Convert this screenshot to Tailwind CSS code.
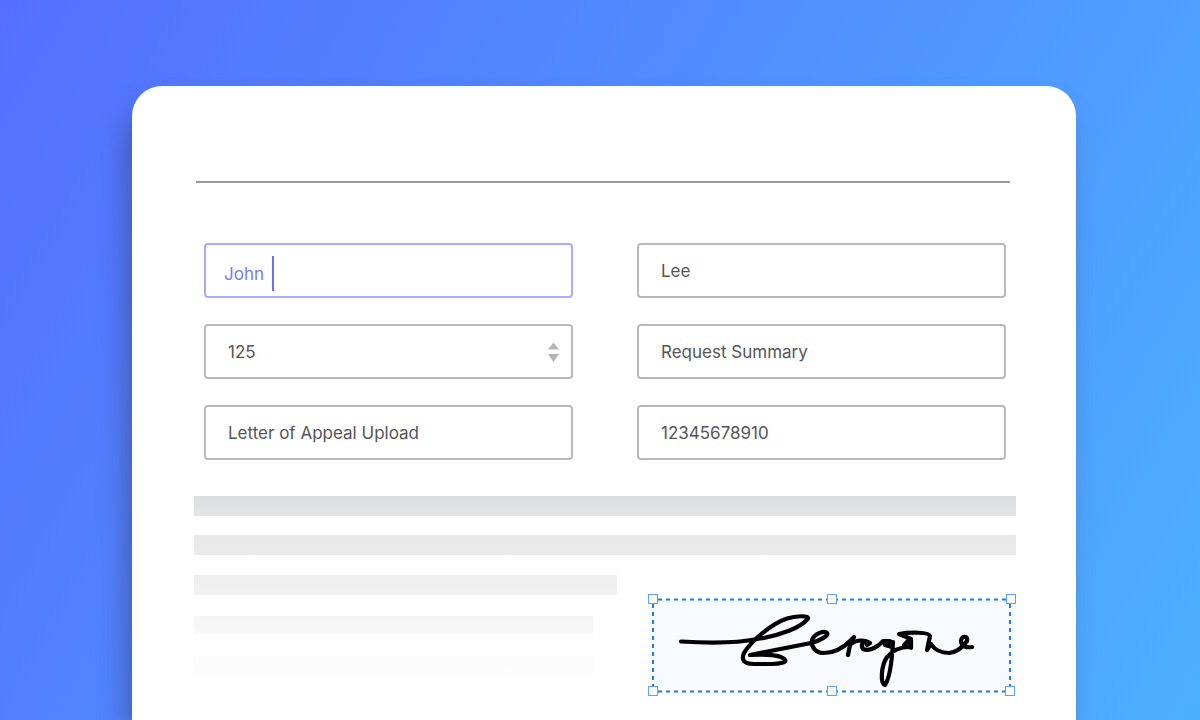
<!DOCTYPE html>
<html lang="en">
  <head>
    <meta charset="UTF-8" />
    <meta name="viewport" content="width=device-width, initial-scale=1.0" />
    <title>Appeal form</title>
    <script src="https://cdn.jsdelivr.net/npm/@tailwindcss/browser@4"></script>
  </head>
  <body class="font-['Inter',sans-serif]">
    <div
      class="h-screen overflow-hidden pt-[86px] pl-[132px] pr-[124px] bg-linear-[120deg,#546fff,#4db0ff]"
    >
      <main
        class="h-full rounded-t-[30px] bg-white pt-[95px] shadow-[-8px_20px_28px_-4px_rgba(50,50,80,0.5)]"
      >
        <hr class="ml-16 mr-[66px] border-t-2 border-[#999]" />

        <form class="mt-[60px] ml-[72px] mr-[70px] grid grid-cols-2 gap-x-16 gap-y-[26px] text-[17px] text-[#555]">
          <div class="relative">
            <input
              type="text"
              aria-label="First name"
              value="John"
              class="block w-full h-[55px] rounded-sm border-2 border-[#a9abff] pt-1.5 px-[18px] text-[#7579ff] outline-none"
            />
            <!-- text caret -->
            <span class="absolute left-[68px] top-[13px] h-[35px] w-[2px] bg-[#6b70ff]"></span>
          </div>
          <input
            type="text"
            aria-label="Last name"
            value="Lee"
            class="block w-full h-[55px] rounded-sm border-2 border-[#b9b9b9] px-[22px] outline-none"
          />
          <div class="relative">
            <input
              type="text"
              inputmode="numeric"
              aria-label="Case number"
              value="125"
              class="block w-full h-[55px] rounded-sm border-2 border-[#b9b9b9] px-[22px] outline-none"
            />
            <svg
              class="absolute right-[14px] top-[18px] w-3 h-5"
              viewBox="0 0 12 20"
              fill="#b5b5b5"
            >
              <path d="M6.5 0.5L12 7.5H1Z M1 12H12L6.5 20Z"></path>
            </svg>
          </div>
          <input
            type="text"
            aria-label="Request summary"
            value="Request Summary"
            class="block w-full h-[55px] rounded-sm border-2 border-[#b9b9b9] px-[22px] outline-none"
          />
          <input
            type="text"
            aria-label="Letter of appeal"
            value="Letter of Appeal Upload"
            class="block w-full h-[55px] rounded-sm border-2 border-[#b9b9b9] px-[22px] outline-none"
          />
          <input
            type="text"
            aria-label="Phone number"
            value="12345678910"
            class="block w-full h-[55px] rounded-sm border-2 border-[#b9b9b9] px-[22px] outline-none"
          />
        </form>

        <div class="mt-9 ml-[62px] mr-[60px]">
          <div class="h-5 bg-linear-to-b from-[#dddee0] to-[#e3e4e5]"></div>
          <div class="mt-[19px] h-5 bg-linear-to-b from-[#e6e7e8] to-[#ebebec]"></div>

          <div class="mt-5 flex justify-between">
            <div class="w-[423px]">
              <div class="h-5 bg-linear-to-b from-[#eeeeee] to-[#f2f2f2]"></div>
              <div class="mt-[21px] mr-6 h-[18px] bg-linear-to-b from-[#f5f5f5] to-[#f8f8f8]"></div>
              <div class="mt-[22px] mr-6 h-[18px] bg-linear-to-b from-[#fbfbfb] to-[#fdfdfd]"></div>
            </div>

            <!-- signature -->
            <svg
              class="mt-[18px] w-[368px] h-[104px]"
              viewBox="648 593 368 104"
              fill="none"
            >
              <rect x="653" y="599" width="357" height="92" fill="#f7fbff" />
              <g stroke="#1a7ef0" stroke-width="2" stroke-dasharray="4 4">
                <path d="M658 599.5H1006M658 691.5H1006"></path>
                <path d="M653 604V686M1010 604V686"></path>
              </g>
              <g fill="#fff" stroke="#5ba3f8">
                <rect x="648.5" y="594.5" width="9" height="9" />
                <rect x="827.5" y="594.5" width="9" height="9" />
                <rect x="1006.5" y="594.5" width="9" height="9" />
                <rect x="648.5" y="686.5" width="9" height="9" />
                <rect x="827.5" y="686.5" width="9" height="9" />
                <rect x="1005.5" y="686.5" width="9" height="9" />
              </g>
              <g
                stroke="#000"
                stroke-width="4.2"
                stroke-linecap="round"
                stroke-linejoin="round"
              >
                <path
                  d="M681 641.5C706 643 738 643 757 639C780 636 802 627 808 618.5C809 615 795 616 787 618.5C771 624 751 641 744 653C741 660 744 664 754 664H772C780 664 787 662 785 660C782 655 765 654 750 655L811 643C822 640 829 635 827 633C824 630 814 634 812 640C811 648 816 653 824 653C835 653 844 647 850 641L854 637L850 645L848 655"
                ></path>
                <path
                  d="M851 644C857 639 866 640 870 643L867 645M870 643C864 640 860 644 863 649C870 652 879 646 883 641H890L885 645L892 647M884 643L891 642M893 642C892 660 890 678 885 685C880 684 881 666 887 657C893 650 901 647 909 647L911 640V648M909 640L904 645M911 639L899 634C910 632 929 632 930 636L927 650L931 644C936 652 944 653 949 653C958 652 963 647 967 641C969 636 961 635 961 641C961 646 966 648 972 647"
                ></path>
              </g>
            </svg>
          </div>
        </div>
      </main>
    </div>
  </body>
</html>
